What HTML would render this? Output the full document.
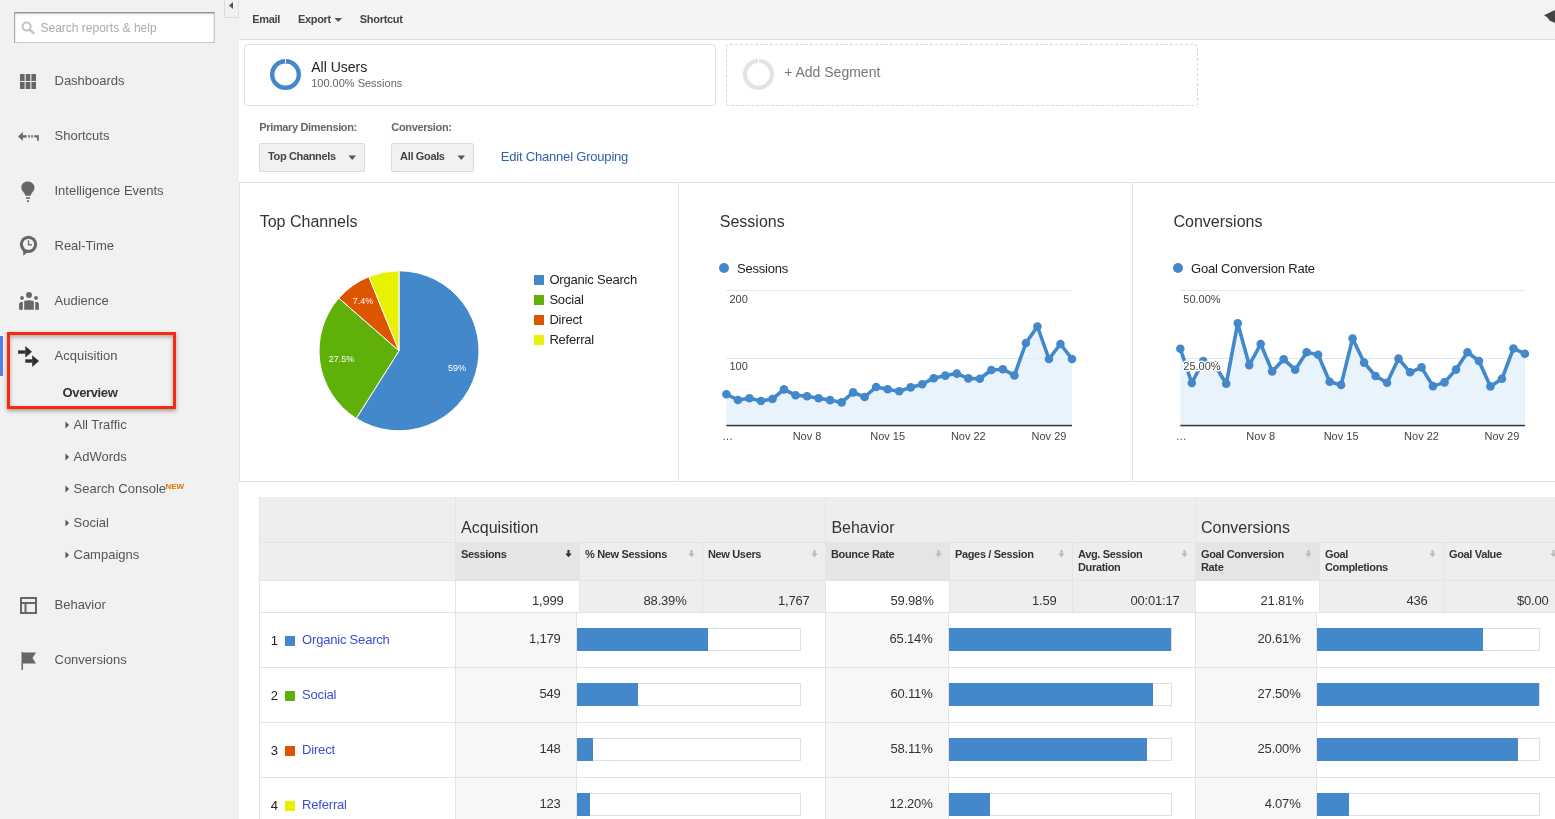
<!DOCTYPE html>
<html><head><meta charset="utf-8"><style>
html,body{margin:0;padding:0;width:1555px;height:819px;overflow:hidden;background:#fff;font-family:'Liberation Sans',sans-serif;}
div{box-sizing:content-box;}
</style></head><body>
<div style="position:absolute;left:0;top:0;width:1555px;height:819px;will-change:transform;">
<div style="position:absolute;left:0px;top:0px;width:239px;height:819px;background:#f1f1f1;"></div>
<div style="position:absolute;left:14px;top:12px;width:201px;height:31px;background:#fff;border-top:1px solid #8f8f8f;border-left:1px solid #a8a8a8;border-right:1px solid #c8c8c8;border-bottom:1px solid #c8c8c8;box-sizing:border-box;box-shadow:inset 0 1px 2px rgba(0,0,0,0.25);"></div>
<svg style="position:absolute;left:21px;top:21px" width="15" height="15" viewBox="0 0 15 15"><circle cx="5.6" cy="5.6" r="4" fill="none" stroke="#c4c4c4" stroke-width="2"/><line x1="8.5" y1="8.5" x2="12.8" y2="12.3" stroke="#c4c4c4" stroke-width="2.4" stroke-linecap="round"/></svg>
<div style="position:absolute;top:21.64px;line-height:12px;font-size:12px;color:#aaa;font-weight:normal;white-space:nowrap;left:40.5px;">Search reports &amp; help</div>
<div style="position:absolute;left:224px;top:0px;width:15px;height:18px;background:#f1f1f1;border:1px solid #dcdcdc;border-top:none;box-sizing:border-box;"></div>
<svg style="position:absolute;left:228px;top:1.3px" width="8" height="9" viewBox="0 0 8 9"><path d="M1 4.5 L5 1 L5 8 Z" fill="#555"/></svg>
<svg style="position:absolute;left:20px;top:74px" width="16" height="15" viewBox="0 0 16 15" fill="#666"><rect x="0" y="0" width="4.6" height="7"/><rect x="5.7" y="0" width="4.6" height="7"/><rect x="11.4" y="0" width="4.6" height="7"/><rect x="0" y="8" width="4.6" height="7"/><rect x="5.7" y="8" width="4.6" height="7"/><rect x="11.4" y="8" width="4.6" height="7"/></svg>
<div style="position:absolute;top:74.00px;line-height:13px;font-size:13px;color:#555;font-weight:normal;white-space:nowrap;left:54.5px;">Dashboards</div>
<svg style="position:absolute;left:18px;top:131px" width="22" height="11" viewBox="0 0 22 11" fill="#666"><path d="M0 5.4 L4.9 1 L4.9 9.8 Z"/><rect x="4.8" y="4.2" width="3.8" height="2.4"/><rect x="10.2" y="4.2" width="1.6" height="2.4"/><rect x="13.2" y="4.2" width="1.6" height="2.4"/><path d="M16.3 4.2 L20.8 4.2 L20.8 9.7 L19.1 9.7 L19.1 6.6 L16.3 6.6 Z"/></svg>
<div style="position:absolute;top:129.00px;line-height:13px;font-size:13px;color:#555;font-weight:normal;white-space:nowrap;left:54.5px;">Shortcuts</div>
<svg style="position:absolute;left:21px;top:181px" width="14" height="22" viewBox="0 0 14 22" fill="#666"><path d="M6.6 0.5 C3 0.5 0.3 3 0.3 6.6 C0.3 9.4 2.4 11.2 3.4 12.4 C4 13.1 4.2 13.9 4.2 14.8 L9.8 14.8 C9.8 13.9 10 13.1 10.6 12.4 C11.6 11.2 13.5 9.4 13.5 6.6 C13.5 3 10.2 0.5 6.6 0.5 Z"/><rect x="5.1" y="16.2" width="3.8" height="1.6"/><rect x="6" y="19.2" width="2" height="1.7"/></svg>
<div style="position:absolute;top:184.00px;line-height:13px;font-size:13px;color:#555;font-weight:normal;white-space:nowrap;left:54.5px;">Intelligence Events</div>
<svg style="position:absolute;left:19px;top:235px" width="19" height="22" viewBox="0 0 19 22"><circle cx="9.5" cy="9.3" r="8.6" fill="#666"/><path d="M4.1 12.5 L4.3 20.8 L10 16 Z" fill="#666"/><circle cx="9.5" cy="9.3" r="5.6" fill="#f1f1f1"/><path d="M9.5 5.3 L9.5 9.8 L13 9.8" fill="none" stroke="#666" stroke-width="1.3"/></svg>
<div style="position:absolute;top:239.00px;line-height:13px;font-size:13px;color:#555;font-weight:normal;white-space:nowrap;left:54.5px;">Real-Time</div>
<svg style="position:absolute;left:19px;top:292px" width="21" height="19" viewBox="0 0 21 19" fill="#666"><circle cx="10" cy="2.95" r="2.95"/><circle cx="3" cy="5.9" r="1.9"/><circle cx="17" cy="5.9" r="1.9"/><path d="M5.2 17.8 L5.2 9 Q10 7.6 14.8 9 L14.8 17.8 Z"/><path d="M0.1 17.8 L0.1 11.6 Q0.6 10.1 2.4 10.1 L3.8 10.1 L3.8 17.8 Z"/><path d="M19.9 17.8 L19.9 11.6 Q19.4 10.1 17.6 10.1 L16.2 10.1 L16.2 17.8 Z"/></svg>
<div style="position:absolute;top:294.00px;line-height:13px;font-size:13px;color:#555;font-weight:normal;white-space:nowrap;left:54.5px;">Audience</div>
<div style="position:absolute;left:0px;top:336px;width:3px;height:40px;background:#5a7ae6;"></div>
<svg style="position:absolute;left:18px;top:345px" width="22" height="23" viewBox="0 0 22 23" fill="#2f2f2f"><rect x="0.1" y="5.4" width="7.4" height="3.3"/><path d="M7.3 1 L14 6.8 L7.3 12.6 Z"/><rect x="7.3" y="14.3" width="7.1" height="3.4"/><path d="M14.2 10.2 L21 16 L14.2 22 Z"/></svg>
<div style="position:absolute;top:349.00px;line-height:13px;font-size:13px;color:#555;font-weight:normal;white-space:nowrap;left:54.5px;">Acquisition</div>
<div style="position:absolute;top:386.00px;line-height:13px;font-size:13px;color:#333;font-weight:bold;white-space:nowrap;letter-spacing:-0.35px;left:62.5px;">Overview</div>
<div style="position:absolute;left:7px;top:332px;width:169px;height:77px;border:3px solid #f52a0e;box-sizing:border-box;box-shadow:0 2px 4px rgba(0,0,0,0.35), inset 0 2px 4px rgba(0,0,0,0.3);"></div>
<svg style="position:absolute;left:65px;top:421px" width="5" height="8" viewBox="0 0 5 8"><path d="M0.5 0.5 L4 4 L0.5 7.5 Z" fill="#555"/></svg>
<div style="position:absolute;top:418.00px;line-height:13px;font-size:13px;color:#555;font-weight:normal;white-space:nowrap;left:73.5px;">All Traffic</div>
<svg style="position:absolute;left:65px;top:453px" width="5" height="8" viewBox="0 0 5 8"><path d="M0.5 0.5 L4 4 L0.5 7.5 Z" fill="#555"/></svg>
<div style="position:absolute;top:450.00px;line-height:13px;font-size:13px;color:#555;font-weight:normal;white-space:nowrap;left:73.5px;">AdWords</div>
<svg style="position:absolute;left:65px;top:485px" width="5" height="8" viewBox="0 0 5 8"><path d="M0.5 0.5 L4 4 L0.5 7.5 Z" fill="#555"/></svg>
<div style="position:absolute;top:482.00px;line-height:13px;font-size:13px;color:#555;font-weight:normal;white-space:nowrap;left:73.5px;">Search Console</div>
<svg style="position:absolute;left:65px;top:519px" width="5" height="8" viewBox="0 0 5 8"><path d="M0.5 0.5 L4 4 L0.5 7.5 Z" fill="#555"/></svg>
<div style="position:absolute;top:516.00px;line-height:13px;font-size:13px;color:#555;font-weight:normal;white-space:nowrap;left:73.5px;">Social</div>
<svg style="position:absolute;left:65px;top:551px" width="5" height="8" viewBox="0 0 5 8"><path d="M0.5 0.5 L4 4 L0.5 7.5 Z" fill="#555"/></svg>
<div style="position:absolute;top:548.00px;line-height:13px;font-size:13px;color:#555;font-weight:normal;white-space:nowrap;left:73.5px;">Campaigns</div>
<div style="position:absolute;top:483.23px;line-height:8px;font-size:8px;color:#e37400;font-weight:bold;white-space:nowrap;left:165.5px;">NEW</div>
<svg style="position:absolute;left:20px;top:597px" width="17" height="17" viewBox="0 0 17 17" fill="none" stroke="#666" stroke-width="2"><rect x="1" y="1" width="15" height="15"/><line x1="1" y1="6" x2="16" y2="6"/><line x1="5.5" y1="6" x2="5.5" y2="16"/></svg>
<div style="position:absolute;top:598.00px;line-height:13px;font-size:13px;color:#555;font-weight:normal;white-space:nowrap;left:54.5px;">Behavior</div>
<svg style="position:absolute;left:21px;top:652px" width="16" height="18" viewBox="0 0 16 18" fill="#666"><rect x="0.5" y="0" width="1.5" height="18"/><path d="M2 0.5 L15 0.5 L11.5 6 L15 11.5 L2 11.5 Z"/></svg>
<div style="position:absolute;top:653.00px;line-height:13px;font-size:13px;color:#555;font-weight:normal;white-space:nowrap;left:54.5px;">Conversions</div>
<div style="position:absolute;left:239px;top:0px;width:1316px;height:39px;background:#f4f4f4;border-bottom:1px solid #dedede;"></div>
<div style="position:absolute;top:13.59px;line-height:11px;font-size:11px;color:#444;font-weight:bold;white-space:nowrap;letter-spacing:-0.3px;left:252.2px;">Email</div>
<div style="position:absolute;top:13.59px;line-height:11px;font-size:11px;color:#444;font-weight:bold;white-space:nowrap;letter-spacing:-0.3px;left:297.9px;">Export</div>
<svg style="position:absolute;left:334px;top:17px" width="9" height="6" viewBox="0 0 9 6"><path d="M0.5 1 L8 1 L4.25 5 Z" fill="#555"/></svg>
<div style="position:absolute;top:13.59px;line-height:11px;font-size:11px;color:#444;font-weight:bold;white-space:nowrap;letter-spacing:-0.3px;left:359.8px;">Shortcut</div>
<svg style="position:absolute;left:1544px;top:9px" width="11" height="16" viewBox="0 0 11 16"><path d="M0 6.2 L11 1 L11 14 L5.5 11.5 L3.5 8.5 Z" fill="#444"/></svg>
<div style="position:absolute;left:239px;top:40px;width:1316px;height:779px;background:#fff;"></div>
<div style="position:absolute;left:244px;top:44px;width:472px;height:62px;border:1px solid #e2e2e2;border-radius:4px;box-sizing:border-box;background:#fff;"></div>
<svg style="position:absolute;left:269px;top:58px" width="33" height="33" viewBox="0 0 33 33"><circle cx="16.5" cy="16.5" r="13.3" fill="none" stroke="#4388cb" stroke-width="4.4"/><line x1="16.5" y1="0" x2="16.5" y2="5" stroke="#fff" stroke-width="1"/></svg>
<div style="position:absolute;top:60.25px;line-height:14px;font-size:14px;color:#222;font-weight:normal;white-space:nowrap;left:311.2px;">All Users</div>
<div style="position:absolute;top:78.29px;line-height:11px;font-size:11px;color:#666;font-weight:normal;white-space:nowrap;left:311.2px;">100.00% Sessions</div>
<div style="position:absolute;left:726px;top:44px;width:472px;height:62px;border:1px dashed #d8d8d8;border-radius:4px;box-sizing:border-box;"></div>
<svg style="position:absolute;left:742px;top:58px" width="33" height="33" viewBox="0 0 33 33"><circle cx="16.5" cy="16.3" r="13.5" fill="none" stroke="#e3e3e3" stroke-width="4.2"/><line x1="16.5" y1="0" x2="16.5" y2="5" stroke="#fff" stroke-width="1"/></svg>
<div style="position:absolute;top:64.95px;line-height:14px;font-size:14px;color:#777;font-weight:normal;white-space:nowrap;left:784.2px;">+ Add Segment</div>
<div style="position:absolute;top:122.09px;line-height:11px;font-size:11px;color:#666;font-weight:bold;white-space:nowrap;letter-spacing:-0.35px;left:259.3px;">Primary Dimension:</div>
<div style="position:absolute;top:122.09px;line-height:11px;font-size:11px;color:#666;font-weight:bold;white-space:nowrap;letter-spacing:-0.35px;left:391.3px;">Conversion:</div>
<div style="position:absolute;left:259px;top:143px;width:106px;height:29px;background:#f1f1f1;border:1px solid #dcdcdc;border-radius:2px;box-sizing:border-box;"></div>
<div style="position:absolute;top:150.69px;line-height:11px;font-size:11px;color:#444;font-weight:bold;white-space:nowrap;letter-spacing:-0.35px;left:268px;">Top Channels</div>
<svg style="position:absolute;left:348px;top:155px" width="9" height="6" viewBox="0 0 9 6"><path d="M0.5 0.6 L8 0.6 L4.25 5 Z" fill="#555"/></svg>
<div style="position:absolute;left:391px;top:143px;width:83px;height:29px;background:#f1f1f1;border:1px solid #dcdcdc;border-radius:2px;box-sizing:border-box;"></div>
<div style="position:absolute;top:150.69px;line-height:11px;font-size:11px;color:#444;font-weight:bold;white-space:nowrap;letter-spacing:-0.35px;left:400.1px;">All Goals</div>
<svg style="position:absolute;left:457px;top:155px" width="9" height="6" viewBox="0 0 9 6"><path d="M0.5 0.6 L8 0.6 L4.25 5 Z" fill="#555"/></svg>
<div style="position:absolute;top:149.90px;line-height:13px;font-size:13px;color:#2f62ad;font-weight:normal;white-space:nowrap;letter-spacing:-0.2px;left:500.8px;">Edit Channel Grouping</div>
<div style="position:absolute;left:239px;top:182px;width:1316px;height:1px;background:#e2e2e2;"></div>
<div style="position:absolute;left:239px;top:481px;width:1316px;height:1px;background:#e2e2e2;"></div>
<div style="position:absolute;left:678px;top:182px;width:1px;height:299px;background:#e2e2e2;"></div>
<div style="position:absolute;left:239px;top:182px;width:1px;height:300px;background:#e4e4e4;"></div>
<div style="position:absolute;left:1132px;top:182px;width:1px;height:299px;background:#e2e2e2;"></div>
<div style="position:absolute;top:213.86px;line-height:16px;font-size:16px;color:#333;font-weight:normal;white-space:nowrap;left:259.7px;">Top Channels</div>
<div style="position:absolute;top:213.86px;line-height:16px;font-size:16px;color:#333;font-weight:normal;white-space:nowrap;left:719.8px;">Sessions</div>
<div style="position:absolute;top:213.86px;line-height:16px;font-size:16px;color:#333;font-weight:normal;white-space:nowrap;left:1173.5px;">Conversions</div>
<svg style="position:absolute;left:0;top:0" width="1555" height="819"><path d="M399 350.8 L399.00 270.80 A80 80 0 1 1 356.22 418.40 Z" fill="#4388cb" stroke="#fff" stroke-width="1"/><path d="M399 350.8 L356.22 418.40 A80 80 0 0 1 338.80 298.11 Z" fill="#5fb10a" stroke="#fff" stroke-width="1"/><path d="M399 350.8 L338.80 298.11 A80 80 0 0 1 368.84 276.70 Z" fill="#dd5500" stroke="#fff" stroke-width="1"/><path d="M399 350.8 L368.84 276.70 A80 80 0 0 1 399.00 270.80 Z" fill="#e8f200" stroke="#fff" stroke-width="1"/><text x="457" y="371" font-family="Liberation Sans" font-size="9" fill="#fff" text-anchor="middle">59%</text><text x="341.6" y="362" font-family="Liberation Sans" font-size="9" fill="#fff" text-anchor="middle">27.5%</text><text x="363" y="304" font-family="Liberation Sans" font-size="9" fill="#fff" text-anchor="middle">7.4%</text></svg>
<div style="position:absolute;left:534px;top:275px;width:10px;height:10px;background:#4388cb;"></div>
<div style="position:absolute;top:273.30px;line-height:13px;font-size:13px;color:#222;font-weight:normal;white-space:nowrap;letter-spacing:-0.2px;left:549.4px;">Organic Search</div>
<div style="position:absolute;left:534px;top:295px;width:10px;height:10px;background:#5fb10a;"></div>
<div style="position:absolute;top:293.30px;line-height:13px;font-size:13px;color:#222;font-weight:normal;white-space:nowrap;letter-spacing:-0.2px;left:549.4px;">Social</div>
<div style="position:absolute;left:534px;top:315px;width:10px;height:10px;background:#dd5500;"></div>
<div style="position:absolute;top:313.30px;line-height:13px;font-size:13px;color:#222;font-weight:normal;white-space:nowrap;letter-spacing:-0.2px;left:549.4px;">Direct</div>
<div style="position:absolute;left:534px;top:335px;width:10px;height:10px;background:#e8f200;"></div>
<div style="position:absolute;top:333.30px;line-height:13px;font-size:13px;color:#222;font-weight:normal;white-space:nowrap;letter-spacing:-0.2px;left:549.4px;">Referral</div>
<svg style="position:absolute;left:0;top:0" width="1555" height="819"><rect x="726.4" y="290" width="345.6" height="1" fill="#e6e6e6"/><rect x="726.4" y="358" width="345.6" height="1" fill="#e6e6e6"/><polygon points="726.4,425 726.40,394.20 737.92,400.00 749.44,398.30 760.96,401.00 772.48,399.00 784.00,389.40 795.52,395.20 807.04,396.30 818.56,398.20 830.08,400.10 841.60,402.40 853.12,392.40 864.64,397.00 876.16,387.00 887.68,389.30 899.20,391.30 910.72,387.40 922.24,384.20 933.76,378.20 945.28,375.60 956.80,373.60 968.32,378.40 979.84,378.70 991.36,370.00 1002.88,369.20 1014.40,375.40 1025.92,343.00 1037.44,326.50 1048.96,359.00 1060.48,344.00 1072.00,359.00 1072.0,425" fill="#e8f3fb"/><rect x="726.4" y="358" width="345.6" height="1" fill="#dde6ee" opacity="0.5"/><polyline points="726.40,394.20 737.92,400.00 749.44,398.30 760.96,401.00 772.48,399.00 784.00,389.40 795.52,395.20 807.04,396.30 818.56,398.20 830.08,400.10 841.60,402.40 853.12,392.40 864.64,397.00 876.16,387.00 887.68,389.30 899.20,391.30 910.72,387.40 922.24,384.20 933.76,378.20 945.28,375.60 956.80,373.60 968.32,378.40 979.84,378.70 991.36,370.00 1002.88,369.20 1014.40,375.40 1025.92,343.00 1037.44,326.50 1048.96,359.00 1060.48,344.00 1072.00,359.00" fill="none" stroke="#4388cb" stroke-width="3.6" stroke-linejoin="round"/><circle cx="726.40" cy="394.20" r="4.3" fill="#4388cb"/><circle cx="737.92" cy="400.00" r="4.3" fill="#4388cb"/><circle cx="749.44" cy="398.30" r="4.3" fill="#4388cb"/><circle cx="760.96" cy="401.00" r="4.3" fill="#4388cb"/><circle cx="772.48" cy="399.00" r="4.3" fill="#4388cb"/><circle cx="784.00" cy="389.40" r="4.3" fill="#4388cb"/><circle cx="795.52" cy="395.20" r="4.3" fill="#4388cb"/><circle cx="807.04" cy="396.30" r="4.3" fill="#4388cb"/><circle cx="818.56" cy="398.20" r="4.3" fill="#4388cb"/><circle cx="830.08" cy="400.10" r="4.3" fill="#4388cb"/><circle cx="841.60" cy="402.40" r="4.3" fill="#4388cb"/><circle cx="853.12" cy="392.40" r="4.3" fill="#4388cb"/><circle cx="864.64" cy="397.00" r="4.3" fill="#4388cb"/><circle cx="876.16" cy="387.00" r="4.3" fill="#4388cb"/><circle cx="887.68" cy="389.30" r="4.3" fill="#4388cb"/><circle cx="899.20" cy="391.30" r="4.3" fill="#4388cb"/><circle cx="910.72" cy="387.40" r="4.3" fill="#4388cb"/><circle cx="922.24" cy="384.20" r="4.3" fill="#4388cb"/><circle cx="933.76" cy="378.20" r="4.3" fill="#4388cb"/><circle cx="945.28" cy="375.60" r="4.3" fill="#4388cb"/><circle cx="956.80" cy="373.60" r="4.3" fill="#4388cb"/><circle cx="968.32" cy="378.40" r="4.3" fill="#4388cb"/><circle cx="979.84" cy="378.70" r="4.3" fill="#4388cb"/><circle cx="991.36" cy="370.00" r="4.3" fill="#4388cb"/><circle cx="1002.88" cy="369.20" r="4.3" fill="#4388cb"/><circle cx="1014.40" cy="375.40" r="4.3" fill="#4388cb"/><circle cx="1025.92" cy="343.00" r="4.3" fill="#4388cb"/><circle cx="1037.44" cy="326.50" r="4.3" fill="#4388cb"/><circle cx="1048.96" cy="359.00" r="4.3" fill="#4388cb"/><circle cx="1060.48" cy="344.00" r="4.3" fill="#4388cb"/><circle cx="1072.00" cy="359.00" r="4.3" fill="#4388cb"/><rect x="726.4" y="424.8" width="345.6" height="1.5" fill="#333"/><text x="807.04" y="440" font-family="Liberation Sans" font-size="11" fill="#444" text-anchor="middle">Nov 8</text><text x="887.68" y="440" font-family="Liberation Sans" font-size="11" fill="#444" text-anchor="middle">Nov 15</text><text x="968.32" y="440" font-family="Liberation Sans" font-size="11" fill="#444" text-anchor="middle">Nov 22</text><text x="1048.96" y="440" font-family="Liberation Sans" font-size="11" fill="#444" text-anchor="middle">Nov 29</text><text x="727.4" y="440" font-family="Liberation Sans" font-size="11" fill="#444" text-anchor="middle">…</text><text x="729.4" y="302.8" font-family="Liberation Sans" font-size="11" fill="#444" stroke="#fff" stroke-width="3" paint-order="stroke" stroke-linejoin="round">200</text><text x="729.4" y="370.3" font-family="Liberation Sans" font-size="11" fill="#444" stroke="#fff" stroke-width="3" paint-order="stroke" stroke-linejoin="round">100</text></svg>
<div style="position:absolute;left:719px;top:263px;width:10px;height:10px;background:#4388cb;border-radius:50%;"></div>
<div style="position:absolute;top:261.50px;line-height:13px;font-size:13px;color:#222;font-weight:normal;white-space:nowrap;letter-spacing:-0.2px;left:737px;">Sessions</div>
<svg style="position:absolute;left:0;top:0" width="1555" height="819"><rect x="1180.3" y="290" width="344.6" height="1" fill="#e6e6e6"/><rect x="1180.3" y="358" width="344.6" height="1" fill="#e6e6e6"/><polygon points="1180.3,425 1180.30,348.80 1191.79,383.00 1203.27,361.00 1214.76,365.00 1226.25,383.80 1237.73,323.20 1249.22,365.10 1260.71,344.00 1272.19,371.40 1283.68,359.30 1295.17,369.70 1306.65,352.30 1318.14,354.75 1329.63,381.70 1341.11,384.90 1352.60,338.50 1364.09,362.60 1375.57,376.00 1387.06,382.80 1398.55,358.60 1410.03,372.30 1421.52,367.40 1433.01,386.10 1444.49,382.40 1455.98,369.60 1467.47,352.20 1478.95,361.00 1490.44,386.40 1501.93,378.80 1513.41,348.50 1524.90,353.70 1524.9,425" fill="#e8f3fb"/><rect x="1180.3" y="358" width="344.6" height="1" fill="#dde6ee" opacity="0.5"/><polyline points="1180.30,348.80 1191.79,383.00 1203.27,361.00 1214.76,365.00 1226.25,383.80 1237.73,323.20 1249.22,365.10 1260.71,344.00 1272.19,371.40 1283.68,359.30 1295.17,369.70 1306.65,352.30 1318.14,354.75 1329.63,381.70 1341.11,384.90 1352.60,338.50 1364.09,362.60 1375.57,376.00 1387.06,382.80 1398.55,358.60 1410.03,372.30 1421.52,367.40 1433.01,386.10 1444.49,382.40 1455.98,369.60 1467.47,352.20 1478.95,361.00 1490.44,386.40 1501.93,378.80 1513.41,348.50 1524.90,353.70" fill="none" stroke="#4388cb" stroke-width="3.6" stroke-linejoin="round"/><circle cx="1180.30" cy="348.80" r="4.3" fill="#4388cb"/><circle cx="1191.79" cy="383.00" r="4.3" fill="#4388cb"/><circle cx="1203.27" cy="361.00" r="4.3" fill="#4388cb"/><circle cx="1214.76" cy="365.00" r="4.3" fill="#4388cb"/><circle cx="1226.25" cy="383.80" r="4.3" fill="#4388cb"/><circle cx="1237.73" cy="323.20" r="4.3" fill="#4388cb"/><circle cx="1249.22" cy="365.10" r="4.3" fill="#4388cb"/><circle cx="1260.71" cy="344.00" r="4.3" fill="#4388cb"/><circle cx="1272.19" cy="371.40" r="4.3" fill="#4388cb"/><circle cx="1283.68" cy="359.30" r="4.3" fill="#4388cb"/><circle cx="1295.17" cy="369.70" r="4.3" fill="#4388cb"/><circle cx="1306.65" cy="352.30" r="4.3" fill="#4388cb"/><circle cx="1318.14" cy="354.75" r="4.3" fill="#4388cb"/><circle cx="1329.63" cy="381.70" r="4.3" fill="#4388cb"/><circle cx="1341.11" cy="384.90" r="4.3" fill="#4388cb"/><circle cx="1352.60" cy="338.50" r="4.3" fill="#4388cb"/><circle cx="1364.09" cy="362.60" r="4.3" fill="#4388cb"/><circle cx="1375.57" cy="376.00" r="4.3" fill="#4388cb"/><circle cx="1387.06" cy="382.80" r="4.3" fill="#4388cb"/><circle cx="1398.55" cy="358.60" r="4.3" fill="#4388cb"/><circle cx="1410.03" cy="372.30" r="4.3" fill="#4388cb"/><circle cx="1421.52" cy="367.40" r="4.3" fill="#4388cb"/><circle cx="1433.01" cy="386.10" r="4.3" fill="#4388cb"/><circle cx="1444.49" cy="382.40" r="4.3" fill="#4388cb"/><circle cx="1455.98" cy="369.60" r="4.3" fill="#4388cb"/><circle cx="1467.47" cy="352.20" r="4.3" fill="#4388cb"/><circle cx="1478.95" cy="361.00" r="4.3" fill="#4388cb"/><circle cx="1490.44" cy="386.40" r="4.3" fill="#4388cb"/><circle cx="1501.93" cy="378.80" r="4.3" fill="#4388cb"/><circle cx="1513.41" cy="348.50" r="4.3" fill="#4388cb"/><circle cx="1524.90" cy="353.70" r="4.3" fill="#4388cb"/><rect x="1180.3" y="424.8" width="344.6" height="1.5" fill="#333"/><text x="1260.71" y="440" font-family="Liberation Sans" font-size="11" fill="#444" text-anchor="middle">Nov 8</text><text x="1341.11" y="440" font-family="Liberation Sans" font-size="11" fill="#444" text-anchor="middle">Nov 15</text><text x="1421.52" y="440" font-family="Liberation Sans" font-size="11" fill="#444" text-anchor="middle">Nov 22</text><text x="1501.93" y="440" font-family="Liberation Sans" font-size="11" fill="#444" text-anchor="middle">Nov 29</text><text x="1181.3" y="440" font-family="Liberation Sans" font-size="11" fill="#444" text-anchor="middle">…</text><text x="1183.3" y="302.8" font-family="Liberation Sans" font-size="11" fill="#444" stroke="#fff" stroke-width="3" paint-order="stroke" stroke-linejoin="round">50.00%</text><text x="1183.3" y="369.5" font-family="Liberation Sans" font-size="11" fill="#444" stroke="#fff" stroke-width="3" paint-order="stroke" stroke-linejoin="round">25.00%</text></svg>
<div style="position:absolute;left:1173px;top:263px;width:10px;height:10px;background:#4388cb;border-radius:50%;"></div>
<div style="position:absolute;top:261.50px;line-height:13px;font-size:13px;color:#222;font-weight:normal;white-space:nowrap;letter-spacing:-0.2px;left:1191px;">Goal Conversion Rate</div>
<div style="position:absolute;left:259px;top:497px;width:1296px;height:322px;background:#fff;"></div>
<div style="position:absolute;left:259px;top:497px;width:1296px;height:46px;background:#eeeeee;"></div>
<div style="position:absolute;left:259px;top:542px;width:1296px;height:1px;background:#e4e4e4;"></div>
<div style="position:absolute;left:259px;top:543px;width:1296px;height:37px;background:#eeeeee;"></div>
<div style="position:absolute;left:259px;top:580px;width:1296px;height:1px;background:#e4e4e4;"></div>
<div style="position:absolute;left:455px;top:497px;width:1px;height:116px;background:#e4e4e4;"></div>
<div style="position:absolute;left:579px;top:543px;width:1px;height:70px;background:#e4e4e4;"></div>
<div style="position:absolute;left:702px;top:543px;width:1px;height:70px;background:#e4e4e4;"></div>
<div style="position:absolute;left:825px;top:497px;width:1px;height:116px;background:#e4e4e4;"></div>
<div style="position:absolute;left:949px;top:543px;width:1px;height:70px;background:#e4e4e4;"></div>
<div style="position:absolute;left:1072px;top:543px;width:1px;height:70px;background:#e4e4e4;"></div>
<div style="position:absolute;left:1195px;top:497px;width:1px;height:116px;background:#e4e4e4;"></div>
<div style="position:absolute;left:1319px;top:543px;width:1px;height:70px;background:#e4e4e4;"></div>
<div style="position:absolute;left:1443px;top:543px;width:1px;height:70px;background:#e4e4e4;"></div>
<div style="position:absolute;left:456px;top:543px;width:123px;height:37px;background:#e5e5e5;"></div>
<div style="position:absolute;left:826px;top:543px;width:123px;height:37px;background:#e5e5e5;"></div>
<div style="position:absolute;left:1196px;top:543px;width:123px;height:37px;background:#e5e5e5;"></div>
<div style="position:absolute;top:519.66px;line-height:16px;font-size:16px;color:#333;font-weight:normal;white-space:nowrap;left:461.1px;">Acquisition</div>
<div style="position:absolute;top:519.66px;line-height:16px;font-size:16px;color:#333;font-weight:normal;white-space:nowrap;left:831.4px;">Behavior</div>
<div style="position:absolute;top:519.66px;line-height:16px;font-size:16px;color:#333;font-weight:normal;white-space:nowrap;left:1201px;">Conversions</div>
<div style="position:absolute;top:548.69px;line-height:11px;font-size:11px;color:#333;font-weight:bold;white-space:nowrap;letter-spacing:-0.35px;left:461px;">Sessions</div>
<svg style="position:absolute;left:565px;top:549px" width="7" height="9" viewBox="0 0 7 9"><rect x="2.4" y="1" width="2.2" height="4.4" fill="#333"/><path d="M0.2 4.6 L6.8 4.6 L3.5 8.2 Z" fill="#333"/></svg>
<div style="position:absolute;top:548.69px;line-height:11px;font-size:11px;color:#333;font-weight:bold;white-space:nowrap;letter-spacing:-0.35px;left:585px;">% New Sessions</div>
<svg style="position:absolute;left:688px;top:549px" width="7" height="9" viewBox="0 0 7 9"><rect x="2.4" y="1" width="2.2" height="4.4" fill="#bbb"/><path d="M0.2 4.6 L6.8 4.6 L3.5 8.2 Z" fill="#bbb"/></svg>
<div style="position:absolute;top:548.69px;line-height:11px;font-size:11px;color:#333;font-weight:bold;white-space:nowrap;letter-spacing:-0.35px;left:708px;">New Users</div>
<svg style="position:absolute;left:811px;top:549px" width="7" height="9" viewBox="0 0 7 9"><rect x="2.4" y="1" width="2.2" height="4.4" fill="#bbb"/><path d="M0.2 4.6 L6.8 4.6 L3.5 8.2 Z" fill="#bbb"/></svg>
<div style="position:absolute;top:548.69px;line-height:11px;font-size:11px;color:#333;font-weight:bold;white-space:nowrap;letter-spacing:-0.35px;left:831px;">Bounce Rate</div>
<svg style="position:absolute;left:935px;top:549px" width="7" height="9" viewBox="0 0 7 9"><rect x="2.4" y="1" width="2.2" height="4.4" fill="#bbb"/><path d="M0.2 4.6 L6.8 4.6 L3.5 8.2 Z" fill="#bbb"/></svg>
<div style="position:absolute;top:548.69px;line-height:11px;font-size:11px;color:#333;font-weight:bold;white-space:nowrap;letter-spacing:-0.35px;left:955px;">Pages / Session</div>
<svg style="position:absolute;left:1058px;top:549px" width="7" height="9" viewBox="0 0 7 9"><rect x="2.4" y="1" width="2.2" height="4.4" fill="#bbb"/><path d="M0.2 4.6 L6.8 4.6 L3.5 8.2 Z" fill="#bbb"/></svg>
<div style="position:absolute;top:548.69px;line-height:11px;font-size:11px;color:#333;font-weight:bold;white-space:nowrap;letter-spacing:-0.35px;left:1078px;">Avg. Session</div>
<div style="position:absolute;top:561.69px;line-height:11px;font-size:11px;color:#333;font-weight:bold;white-space:nowrap;letter-spacing:-0.35px;left:1078px;">Duration</div>
<svg style="position:absolute;left:1181px;top:549px" width="7" height="9" viewBox="0 0 7 9"><rect x="2.4" y="1" width="2.2" height="4.4" fill="#bbb"/><path d="M0.2 4.6 L6.8 4.6 L3.5 8.2 Z" fill="#bbb"/></svg>
<div style="position:absolute;top:548.69px;line-height:11px;font-size:11px;color:#333;font-weight:bold;white-space:nowrap;letter-spacing:-0.35px;left:1201px;">Goal Conversion</div>
<div style="position:absolute;top:561.69px;line-height:11px;font-size:11px;color:#333;font-weight:bold;white-space:nowrap;letter-spacing:-0.35px;left:1201px;">Rate</div>
<svg style="position:absolute;left:1305px;top:549px" width="7" height="9" viewBox="0 0 7 9"><rect x="2.4" y="1" width="2.2" height="4.4" fill="#bbb"/><path d="M0.2 4.6 L6.8 4.6 L3.5 8.2 Z" fill="#bbb"/></svg>
<div style="position:absolute;top:548.69px;line-height:11px;font-size:11px;color:#333;font-weight:bold;white-space:nowrap;letter-spacing:-0.35px;left:1325px;">Goal</div>
<div style="position:absolute;top:561.69px;line-height:11px;font-size:11px;color:#333;font-weight:bold;white-space:nowrap;letter-spacing:-0.35px;left:1325px;">Completions</div>
<svg style="position:absolute;left:1429px;top:549px" width="7" height="9" viewBox="0 0 7 9"><rect x="2.4" y="1" width="2.2" height="4.4" fill="#bbb"/><path d="M0.2 4.6 L6.8 4.6 L3.5 8.2 Z" fill="#bbb"/></svg>
<div style="position:absolute;top:548.69px;line-height:11px;font-size:11px;color:#333;font-weight:bold;white-space:nowrap;letter-spacing:-0.35px;left:1449px;">Goal Value</div>
<svg style="position:absolute;left:1550px;top:549px" width="7" height="9" viewBox="0 0 7 9"><rect x="2.4" y="1" width="2.2" height="4.4" fill="#bbb"/><path d="M0.2 4.6 L6.8 4.6 L3.5 8.2 Z" fill="#bbb"/></svg>
<div style="position:absolute;left:259px;top:581px;width:1296px;height:31px;background:#fff;"></div>
<div style="position:absolute;left:580px;top:581px;width:122px;height:31px;background:#eeeeee;"></div>
<div style="position:absolute;left:703px;top:581px;width:122px;height:31px;background:#eeeeee;"></div>
<div style="position:absolute;left:950px;top:581px;width:122px;height:31px;background:#eeeeee;"></div>
<div style="position:absolute;left:1073px;top:581px;width:122px;height:31px;background:#eeeeee;"></div>
<div style="position:absolute;left:1320px;top:581px;width:123px;height:31px;background:#eeeeee;"></div>
<div style="position:absolute;left:1444px;top:581px;width:120px;height:31px;background:#eeeeee;"></div>
<div style="position:absolute;left:455px;top:581px;width:1px;height:31px;background:#e4e4e4;"></div>
<div style="position:absolute;left:579px;top:581px;width:1px;height:31px;background:#e4e4e4;"></div>
<div style="position:absolute;left:702px;top:581px;width:1px;height:31px;background:#e4e4e4;"></div>
<div style="position:absolute;left:825px;top:581px;width:1px;height:31px;background:#e4e4e4;"></div>
<div style="position:absolute;left:949px;top:581px;width:1px;height:31px;background:#e4e4e4;"></div>
<div style="position:absolute;left:1072px;top:581px;width:1px;height:31px;background:#e4e4e4;"></div>
<div style="position:absolute;left:1195px;top:581px;width:1px;height:31px;background:#e4e4e4;"></div>
<div style="position:absolute;left:1319px;top:581px;width:1px;height:31px;background:#e4e4e4;"></div>
<div style="position:absolute;left:1443px;top:581px;width:1px;height:31px;background:#e4e4e4;"></div>
<div style="position:absolute;left:259px;top:612px;width:1296px;height:1px;background:#e4e4e4;"></div>
<div style="position:absolute;top:593.50px;line-height:13px;font-size:13px;color:#333;font-weight:normal;white-space:nowrap;letter-spacing:-0.2px;right:991.5px;text-align:right;">1,999</div>
<div style="position:absolute;top:593.50px;line-height:13px;font-size:13px;color:#333;font-weight:normal;white-space:nowrap;letter-spacing:-0.2px;right:868.5px;text-align:right;">88.39%</div>
<div style="position:absolute;top:593.50px;line-height:13px;font-size:13px;color:#333;font-weight:normal;white-space:nowrap;letter-spacing:-0.2px;right:745.5px;text-align:right;">1,767</div>
<div style="position:absolute;top:593.50px;line-height:13px;font-size:13px;color:#333;font-weight:normal;white-space:nowrap;letter-spacing:-0.2px;right:621.5px;text-align:right;">59.98%</div>
<div style="position:absolute;top:593.50px;line-height:13px;font-size:13px;color:#333;font-weight:normal;white-space:nowrap;letter-spacing:-0.2px;right:498.5px;text-align:right;">1.59</div>
<div style="position:absolute;top:593.50px;line-height:13px;font-size:13px;color:#333;font-weight:normal;white-space:nowrap;letter-spacing:-0.2px;right:375.5px;text-align:right;">00:01:17</div>
<div style="position:absolute;top:593.50px;line-height:13px;font-size:13px;color:#333;font-weight:normal;white-space:nowrap;letter-spacing:-0.2px;right:251.5px;text-align:right;">21.81%</div>
<div style="position:absolute;top:593.50px;line-height:13px;font-size:13px;color:#333;font-weight:normal;white-space:nowrap;letter-spacing:-0.2px;right:127.5px;text-align:right;">436</div>
<div style="position:absolute;top:593.50px;line-height:13px;font-size:13px;color:#333;font-weight:normal;white-space:nowrap;letter-spacing:-0.2px;right:6.5px;text-align:right;">$0.00</div>
<div style="position:absolute;left:259px;top:497px;width:1px;height:322px;background:#e4e4e4;"></div>
<div style="position:absolute;left:259px;top:667px;width:1296px;height:1px;background:#e4e4e4;"></div>
<div style="position:absolute;left:455px;top:613px;width:1px;height:54px;background:#e4e4e4;"></div>
<div style="position:absolute;left:456px;top:613px;width:121px;height:54px;background:#f7f7f7;"></div>
<div style="position:absolute;left:576px;top:613px;width:1px;height:54px;background:#e4e4e4;"></div>
<div style="position:absolute;top:632.00px;line-height:13px;font-size:13px;color:#333;font-weight:normal;white-space:nowrap;letter-spacing:-0.2px;right:994.5px;text-align:right;">1,179</div>
<div style="position:absolute;left:577px;top:628px;width:224px;height:23px;border:1px solid #e0e0e0;box-sizing:border-box;background:#fff;"></div>
<div style="position:absolute;left:577px;top:628px;width:131px;height:23px;background:#4388cb;"></div>
<div style="position:absolute;left:825px;top:613px;width:1px;height:54px;background:#e4e4e4;"></div>
<div style="position:absolute;left:826px;top:613px;width:123px;height:54px;background:#f7f7f7;"></div>
<div style="position:absolute;left:948px;top:613px;width:1px;height:54px;background:#e4e4e4;"></div>
<div style="position:absolute;top:632.00px;line-height:13px;font-size:13px;color:#333;font-weight:normal;white-space:nowrap;letter-spacing:-0.2px;right:622.5px;text-align:right;">65.14%</div>
<div style="position:absolute;left:949px;top:628px;width:223px;height:23px;border:1px solid #e0e0e0;box-sizing:border-box;background:#fff;"></div>
<div style="position:absolute;left:949px;top:628px;width:222px;height:23px;background:#4388cb;"></div>
<div style="position:absolute;left:1195px;top:613px;width:1px;height:54px;background:#e4e4e4;"></div>
<div style="position:absolute;left:1196px;top:613px;width:121px;height:54px;background:#f7f7f7;"></div>
<div style="position:absolute;left:1316px;top:613px;width:1px;height:54px;background:#e4e4e4;"></div>
<div style="position:absolute;top:632.00px;line-height:13px;font-size:13px;color:#333;font-weight:normal;white-space:nowrap;letter-spacing:-0.2px;right:254.5px;text-align:right;">20.61%</div>
<div style="position:absolute;left:1317px;top:628px;width:223px;height:23px;border:1px solid #e0e0e0;box-sizing:border-box;background:#fff;"></div>
<div style="position:absolute;left:1317px;top:628px;width:166px;height:23px;background:#4388cb;"></div>
<div style="position:absolute;top:633.50px;line-height:13px;font-size:13px;color:#222;font-weight:normal;white-space:nowrap;left:270.8px;">1</div>
<div style="position:absolute;left:285px;top:636px;width:10px;height:10px;background:#4388cb;"></div>
<div style="position:absolute;top:633.00px;line-height:13px;font-size:13px;color:#3a4fd4;font-weight:normal;white-space:nowrap;letter-spacing:-0.2px;left:302.1px;">Organic Search</div>
<div style="position:absolute;left:259px;top:722px;width:1296px;height:1px;background:#e4e4e4;"></div>
<div style="position:absolute;left:455px;top:668px;width:1px;height:54px;background:#e4e4e4;"></div>
<div style="position:absolute;left:456px;top:668px;width:121px;height:54px;background:#f7f7f7;"></div>
<div style="position:absolute;left:576px;top:668px;width:1px;height:54px;background:#e4e4e4;"></div>
<div style="position:absolute;top:687.00px;line-height:13px;font-size:13px;color:#333;font-weight:normal;white-space:nowrap;letter-spacing:-0.2px;right:994.5px;text-align:right;">549</div>
<div style="position:absolute;left:577px;top:683px;width:224px;height:23px;border:1px solid #e0e0e0;box-sizing:border-box;background:#fff;"></div>
<div style="position:absolute;left:577px;top:683px;width:61px;height:23px;background:#4388cb;"></div>
<div style="position:absolute;left:825px;top:668px;width:1px;height:54px;background:#e4e4e4;"></div>
<div style="position:absolute;left:826px;top:668px;width:123px;height:54px;background:#f7f7f7;"></div>
<div style="position:absolute;left:948px;top:668px;width:1px;height:54px;background:#e4e4e4;"></div>
<div style="position:absolute;top:687.00px;line-height:13px;font-size:13px;color:#333;font-weight:normal;white-space:nowrap;letter-spacing:-0.2px;right:622.5px;text-align:right;">60.11%</div>
<div style="position:absolute;left:949px;top:683px;width:223px;height:23px;border:1px solid #e0e0e0;box-sizing:border-box;background:#fff;"></div>
<div style="position:absolute;left:949px;top:683px;width:204px;height:23px;background:#4388cb;"></div>
<div style="position:absolute;left:1195px;top:668px;width:1px;height:54px;background:#e4e4e4;"></div>
<div style="position:absolute;left:1196px;top:668px;width:121px;height:54px;background:#f7f7f7;"></div>
<div style="position:absolute;left:1316px;top:668px;width:1px;height:54px;background:#e4e4e4;"></div>
<div style="position:absolute;top:687.00px;line-height:13px;font-size:13px;color:#333;font-weight:normal;white-space:nowrap;letter-spacing:-0.2px;right:254.5px;text-align:right;">27.50%</div>
<div style="position:absolute;left:1317px;top:683px;width:223px;height:23px;border:1px solid #e0e0e0;box-sizing:border-box;background:#fff;"></div>
<div style="position:absolute;left:1317px;top:683px;width:222px;height:23px;background:#4388cb;"></div>
<div style="position:absolute;top:688.50px;line-height:13px;font-size:13px;color:#222;font-weight:normal;white-space:nowrap;left:270.8px;">2</div>
<div style="position:absolute;left:285px;top:691px;width:10px;height:10px;background:#5fb10a;"></div>
<div style="position:absolute;top:688.00px;line-height:13px;font-size:13px;color:#3a4fd4;font-weight:normal;white-space:nowrap;letter-spacing:-0.2px;left:302.1px;">Social</div>
<div style="position:absolute;left:259px;top:777px;width:1296px;height:1px;background:#e4e4e4;"></div>
<div style="position:absolute;left:455px;top:723px;width:1px;height:54px;background:#e4e4e4;"></div>
<div style="position:absolute;left:456px;top:723px;width:121px;height:54px;background:#f7f7f7;"></div>
<div style="position:absolute;left:576px;top:723px;width:1px;height:54px;background:#e4e4e4;"></div>
<div style="position:absolute;top:742.00px;line-height:13px;font-size:13px;color:#333;font-weight:normal;white-space:nowrap;letter-spacing:-0.2px;right:994.5px;text-align:right;">148</div>
<div style="position:absolute;left:577px;top:738px;width:224px;height:23px;border:1px solid #e0e0e0;box-sizing:border-box;background:#fff;"></div>
<div style="position:absolute;left:577px;top:738px;width:16px;height:23px;background:#4388cb;"></div>
<div style="position:absolute;left:825px;top:723px;width:1px;height:54px;background:#e4e4e4;"></div>
<div style="position:absolute;left:826px;top:723px;width:123px;height:54px;background:#f7f7f7;"></div>
<div style="position:absolute;left:948px;top:723px;width:1px;height:54px;background:#e4e4e4;"></div>
<div style="position:absolute;top:742.00px;line-height:13px;font-size:13px;color:#333;font-weight:normal;white-space:nowrap;letter-spacing:-0.2px;right:622.5px;text-align:right;">58.11%</div>
<div style="position:absolute;left:949px;top:738px;width:223px;height:23px;border:1px solid #e0e0e0;box-sizing:border-box;background:#fff;"></div>
<div style="position:absolute;left:949px;top:738px;width:198px;height:23px;background:#4388cb;"></div>
<div style="position:absolute;left:1195px;top:723px;width:1px;height:54px;background:#e4e4e4;"></div>
<div style="position:absolute;left:1196px;top:723px;width:121px;height:54px;background:#f7f7f7;"></div>
<div style="position:absolute;left:1316px;top:723px;width:1px;height:54px;background:#e4e4e4;"></div>
<div style="position:absolute;top:742.00px;line-height:13px;font-size:13px;color:#333;font-weight:normal;white-space:nowrap;letter-spacing:-0.2px;right:254.5px;text-align:right;">25.00%</div>
<div style="position:absolute;left:1317px;top:738px;width:223px;height:23px;border:1px solid #e0e0e0;box-sizing:border-box;background:#fff;"></div>
<div style="position:absolute;left:1317px;top:738px;width:201px;height:23px;background:#4388cb;"></div>
<div style="position:absolute;top:743.50px;line-height:13px;font-size:13px;color:#222;font-weight:normal;white-space:nowrap;left:270.8px;">3</div>
<div style="position:absolute;left:285px;top:746px;width:10px;height:10px;background:#dd5500;"></div>
<div style="position:absolute;top:743.00px;line-height:13px;font-size:13px;color:#3a4fd4;font-weight:normal;white-space:nowrap;letter-spacing:-0.2px;left:302.1px;">Direct</div>
<div style="position:absolute;left:259px;top:832px;width:1296px;height:1px;background:#e4e4e4;"></div>
<div style="position:absolute;left:455px;top:778px;width:1px;height:54px;background:#e4e4e4;"></div>
<div style="position:absolute;left:456px;top:778px;width:121px;height:54px;background:#f7f7f7;"></div>
<div style="position:absolute;left:576px;top:778px;width:1px;height:54px;background:#e4e4e4;"></div>
<div style="position:absolute;top:797.00px;line-height:13px;font-size:13px;color:#333;font-weight:normal;white-space:nowrap;letter-spacing:-0.2px;right:994.5px;text-align:right;">123</div>
<div style="position:absolute;left:577px;top:793px;width:224px;height:23px;border:1px solid #e0e0e0;box-sizing:border-box;background:#fff;"></div>
<div style="position:absolute;left:577px;top:793px;width:13px;height:23px;background:#4388cb;"></div>
<div style="position:absolute;left:825px;top:778px;width:1px;height:54px;background:#e4e4e4;"></div>
<div style="position:absolute;left:826px;top:778px;width:123px;height:54px;background:#f7f7f7;"></div>
<div style="position:absolute;left:948px;top:778px;width:1px;height:54px;background:#e4e4e4;"></div>
<div style="position:absolute;top:797.00px;line-height:13px;font-size:13px;color:#333;font-weight:normal;white-space:nowrap;letter-spacing:-0.2px;right:622.5px;text-align:right;">12.20%</div>
<div style="position:absolute;left:949px;top:793px;width:223px;height:23px;border:1px solid #e0e0e0;box-sizing:border-box;background:#fff;"></div>
<div style="position:absolute;left:949px;top:793px;width:41px;height:23px;background:#4388cb;"></div>
<div style="position:absolute;left:1195px;top:778px;width:1px;height:54px;background:#e4e4e4;"></div>
<div style="position:absolute;left:1196px;top:778px;width:121px;height:54px;background:#f7f7f7;"></div>
<div style="position:absolute;left:1316px;top:778px;width:1px;height:54px;background:#e4e4e4;"></div>
<div style="position:absolute;top:797.00px;line-height:13px;font-size:13px;color:#333;font-weight:normal;white-space:nowrap;letter-spacing:-0.2px;right:254.5px;text-align:right;">4.07%</div>
<div style="position:absolute;left:1317px;top:793px;width:223px;height:23px;border:1px solid #e0e0e0;box-sizing:border-box;background:#fff;"></div>
<div style="position:absolute;left:1317px;top:793px;width:32px;height:23px;background:#4388cb;"></div>
<div style="position:absolute;top:798.50px;line-height:13px;font-size:13px;color:#222;font-weight:normal;white-space:nowrap;left:270.8px;">4</div>
<div style="position:absolute;left:285px;top:801px;width:10px;height:10px;background:#e8f200;"></div>
<div style="position:absolute;top:798.00px;line-height:13px;font-size:13px;color:#3a4fd4;font-weight:normal;white-space:nowrap;letter-spacing:-0.2px;left:302.1px;">Referral</div>
</div>
</body></html>
